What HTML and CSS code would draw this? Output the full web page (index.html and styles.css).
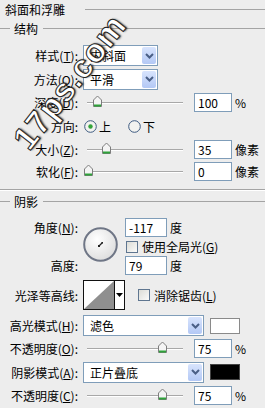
FILE: index.html
```html
<!DOCTYPE html>
<html lang="zh-CN">
<head>
  <meta charset="UTF-8" />
  <title>斜面和浮雕</title>
  <link rel="stylesheet" href="styles.css">
</head>
<body>
  <div class="panel">
    <div class="title"><span>斜面和浮雕</span><i class="line"></i></div>

    <div class="group">
      <div class="legend"><i class="lead"></i><span>结构</span><i class="line"></i></div>
      <div class="fields top-fields">
        <div class="row h23">
          <label class="lbl">样式(<u>T</u>):</label>
          <div class="select short"><span>内斜面</span><b class="arrow"><svg width="9" height="6" viewBox="0 0 9 6"><path d="M1 1 L4.5 4.5 L8 1" fill="none" stroke="#4a5f86" stroke-width="2"/></svg></b></div>
        </div>
        <div class="row h24">
          <label class="lbl">方法(<u>Q</u>):</label>
          <div class="select short"><span>平滑</span><b class="arrow"><svg width="9" height="6" viewBox="0 0 9 6"><path d="M1 1 L4.5 4.5 L8 1" fill="none" stroke="#4a5f86" stroke-width="2"/></svg></b></div>
        </div>
        <div class="row h23">
          <label class="lbl">深度(<u>D</u>):</label>
          <div class="slider"><span class="thumb" style="left: 10px"><svg width="11" height="13" viewBox="0 0 11 13"><path d="M1.5 5 L5.5 1 L9.5 5 L9.5 11.5 L1.5 11.5 Z" fill="#f4f4f4" stroke="#7d7d7d"/><path d="M2 10.5 H9" stroke="#2fa33a" stroke-width="2"/></svg></span></div>
          <div class="num">100</div><span class="unit">%</span>
        </div>
        <div class="row h24">
          <label class="lbl">方向:</label>
          <span class="radio"><svg width="13" height="13" viewBox="0 0 13 13"><circle cx="6.5" cy="6.5" r="5.8" fill="#f3f3f0" stroke="#3d5a80"/><circle cx="6.5" cy="6.5" r="2.2" fill="#33a33a"/></svg>上</span>
          <span class="radio second"><svg width="13" height="13" viewBox="0 0 13 13"><circle cx="6.5" cy="6.5" r="5.8" fill="#f3f3f0" stroke="#3d5a80"/></svg>下</span>
        </div>
        <div class="row h22">
          <label class="lbl">大小(<u>Z</u>):</label>
          <div class="slider"><span class="thumb" style="left: 19px"><svg width="11" height="13" viewBox="0 0 11 13"><path d="M1.5 5 L5.5 1 L9.5 5 L9.5 11.5 L1.5 11.5 Z" fill="#f4f4f4" stroke="#7d7d7d"/><path d="M2 10.5 H9" stroke="#2fa33a" stroke-width="2"/></svg></span></div>
          <div class="num">35</div><span class="unit">像素</span>
        </div>
        <div class="row h23">
          <label class="lbl">软化(<u>F</u>):</label>
          <div class="slider"><span class="thumb" style="left: 1px"><svg width="11" height="13" viewBox="0 0 11 13"><path d="M1.5 5 L5.5 1 L9.5 5 L9.5 11.5 L1.5 11.5 Z" fill="#f4f4f4" stroke="#7d7d7d"/><path d="M2 10.5 H9" stroke="#2fa33a" stroke-width="2"/></svg></span></div>
          <div class="num">0</div><span class="unit">像素</span>
        </div>
      </div>
    </div>

    <div class="group shade">
      <div class="legend"><i class="lead"></i><span>阴影</span><i class="line"></i></div>
      <div class="fields">
        <div class="angle">
          <label class="lbl a-label">角度(<u>N</u>):</label>
          <div class="dial"><svg width="35" height="35" viewBox="0 0 35 35"><defs><radialGradient id="dg" cx="40%" cy="35%" r="70%"><stop offset="0" stop-color="#ffffff"/><stop offset="1" stop-color="#dcdcdc"/></radialGradient></defs><circle cx="17.5" cy="17.5" r="16.3" fill="url(#dg)" stroke="#6f7686" stroke-width="2"/><path d="M16.5 18.5 L19.5 15.5" stroke="#222" stroke-width="1.2"/><path d="M18 15 L20 15 L20 17 Z" fill="#222"/><rect x="15" y="18" width="2" height="2" fill="#222"/></svg></div>
          <div class="a-val"><div class="num wide">-117</div><span class="unit">度</span></div>
          <div class="a-check"><i class="check"></i><span>使用全局光(<u>G</u>)</span></div>
          <label class="lbl h-label">高度:</label>
          <div class="h-val"><div class="num wide">79</div><span class="unit">度</span></div>
        </div>
        <div class="row h32">
          <label class="lbl">光泽等高线:</label>
          <div class="contour">
            <svg width="30" height="28" viewBox="0 0 30 28"><path d="M0 28 L30 0 L30 28 Z" fill="#8f8f8f"/></svg>
            <span class="drop"><svg width="7" height="4" viewBox="0 0 7 4"><path d="M0 0 H7 L3.5 4 Z" fill="#000"/></svg></span>
          </div>
          <span class="check-item"><i class="check"></i><span>消除锯齿(<u>L</u>)</span></span>
        </div>
        <div class="row h23 gap3">
          <label class="lbl">高光模式(<u>H</u>):</label>
          <div class="select long"><span>滤色</span><b class="arrow"><svg width="9" height="6" viewBox="0 0 9 6"><path d="M1 1 L4.5 4.5 L8 1" fill="none" stroke="#4a5f86" stroke-width="2"/></svg></b></div>
          <i class="swatch white"></i>
        </div>
        <div class="row h22">
          <label class="lbl">不透明度(<u>O</u>):</label>
          <div class="slider"><span class="thumb" style="left: 75px"><svg width="11" height="13" viewBox="0 0 11 13"><path d="M1.5 5 L5.5 1 L9.5 5 L9.5 11.5 L1.5 11.5 Z" fill="#f4f4f4" stroke="#7d7d7d"/><path d="M2 10.5 H9" stroke="#2fa33a" stroke-width="2"/></svg></span></div>
          <div class="num">75</div><span class="unit">%</span>
        </div>
        <div class="row h26">
          <label class="lbl">阴影模式(<u>A</u>):</label>
          <div class="select long"><span>正片叠底</span><b class="arrow"><svg width="9" height="6" viewBox="0 0 9 6"><path d="M1 1 L4.5 4.5 L8 1" fill="none" stroke="#4a5f86" stroke-width="2"/></svg></b></div>
          <i class="swatch black"></i>
        </div>
        <div class="row h21">
          <label class="lbl">不透明度(<u>C</u>):</label>
          <div class="slider"><span class="thumb" style="left: 75px"><svg width="11" height="13" viewBox="0 0 11 13"><path d="M1.5 5 L5.5 1 L9.5 5 L9.5 11.5 L1.5 11.5 Z" fill="#f4f4f4" stroke="#7d7d7d"/><path d="M2 10.5 H9" stroke="#2fa33a" stroke-width="2"/></svg></span></div>
          <div class="num">75</div><span class="unit">%</span>
        </div>
      </div>
    </div>

    <div class="watermark">17ps.com</div>
  </div>
</body>
</html>
```

FILE: styles.css
```css
body {
  margin: 0;
  background: #ededed;
  font-family: "Noto Sans CJK SC", "Liberation Sans", sans-serif;
  font-size: 12px;
  color: #000;
}
u { text-decoration: underline; text-underline-offset: 1px; }
.panel {
  position: relative;
  width: 265px;
  height: 408px;
  overflow: hidden;
}
.title {
  display: flex;
  align-items: center;
  height: 19px;
  padding-left: 5px;
}
.title .line {
  flex: 1;
  margin-left: 20px;
  border-top: 1px solid #a4a4a4;
}
.legend {
  display: flex;
  align-items: center;
  height: 18px;
}
.legend .lead {
  width: 10px;
  border-top: 1px solid #a4a4a4;
  margin-right: 4px;
}
.legend .line {
  flex: 1;
  margin-left: 5px;
  border-top: 1px solid #a4a4a4;
}
.group {
  padding-bottom: 6px;
  border-bottom: 1px solid #a4a4a4;
  box-shadow: 0 1px 0 #fff;
}
.group.shade {
  border-bottom: none;
  box-shadow: none;
  margin-top: 2px;
}
.fields { padding-top: 6px; }
.top-fields { padding-top: 7px; }

.row { display: flex; align-items: center; }
.h21 { height: 21px; }
.h22 { height: 22px; }
.h23 { height: 23px; }
.h24 { height: 24px; }
.h26 { height: 26px; }
.h32 { height: 32px; margin-top: 3px; }
.gap3 { margin-top: 3px; }

.lbl {
  flex: none;
  width: 78px;
  text-align: right;
  white-space: nowrap;
}

.select {
  margin-left: 5px;
  height: 21px;
  box-sizing: border-box;
  border: 1px solid #7f9db9;
  background: #fff;
  display: flex;
  align-items: center;
  padding-left: 6px;
}
.select.short { width: 75px; }
.select.long { width: 121px; }
.arrow {
  margin-left: auto;
  margin-right: 1px;
  width: 14px;
  height: 17px;
  border-radius: 2px;
  background: linear-gradient(#d8e4fd, #b3c8f5);
  display: flex;
  align-items: center;
  justify-content: center;
}

.slider {
  position: relative;
  margin-left: 9px;
  width: 96px;
  height: 13px;
}
.slider::before {
  content: "";
  position: absolute;
  left: 0;
  right: 0;
  top: 6px;
  border-top: 1px solid #a8a8a8;
  border-bottom: 1px solid #fff;
}
.thumb {
  position: absolute;
  top: -1px;
  margin-left: -5px;
  line-height: 0;
}

.num {
  margin-left: 11px;
  width: 38px;
  height: 19px;
  box-sizing: border-box;
  border: 1px solid #7f9db9;
  background: #fff;
  padding-left: 3px;
  line-height: 17px;
}
.num.wide { margin-left: 0; width: 42px; }
.unit { margin-left: 3px; }

.radio {
  display: flex;
  align-items: center;
  gap: 2px;
  margin-left: 6px;
}
.radio.second { margin-left: 17px; }

.angle {
  display: grid;
  grid-template-columns: 83px 42px 1fr;
  grid-template-rows: 22px 17px 21px;
  align-items: center;
}
.a-label { grid-column: 1; grid-row: 1; }
.h-label { grid-column: 1; grid-row: 3; }
.dial {
  grid-column: 2;
  grid-row: 1 / 4;
  line-height: 0;
  margin-bottom: 4px;
}
.a-val, .h-val { grid-column: 3; display: flex; align-items: center; }
.a-val { grid-row: 1; }
.h-val { grid-row: 3; }
.a-check {
  grid-column: 3;
  grid-row: 2;
  display: flex;
  align-items: center;
  margin-left: 1px;
}
.check {
  display: inline-block;
  width: 12px;
  height: 12px;
  box-sizing: border-box;
  border: 1px solid #5f7690;
  background: linear-gradient(135deg, #dcdcd6, #fbfbfa);
  margin-right: 4px;
}

.contour {
  margin-left: 5px;
  width: 42px;
  height: 30px;
  box-sizing: border-box;
  border: 1px solid #111;
  background: #fff;
  display: flex;
  line-height: 0;
}
.contour .drop {
  flex: 1;
  border-left: 1px solid #111;
  display: flex;
  align-items: center;
  justify-content: center;
}
.check-item {
  display: flex;
  align-items: center;
  margin-left: 13px;
}

.swatch {
  margin-left: 6px;
  width: 30px;
  height: 16px;
  box-sizing: border-box;
  border: 1px solid #8a8a8a;
}
.swatch.white { background: #fff; }
.swatch.black { background: #000; border-color: #444; }

.watermark {
  position: absolute;
  left: 70px;
  top: 82px;
  transform: translate(-50%, -50%) rotate(-52deg);
  font: bold 33px "Liberation Sans", sans-serif;
  letter-spacing: 1px;
  color: #fff;
  -webkit-text-stroke: 1px #222;
  text-shadow: 1px 1px 2px rgba(0, 0, 0, 0.8);
  white-space: nowrap;
  pointer-events: none;
}
```
